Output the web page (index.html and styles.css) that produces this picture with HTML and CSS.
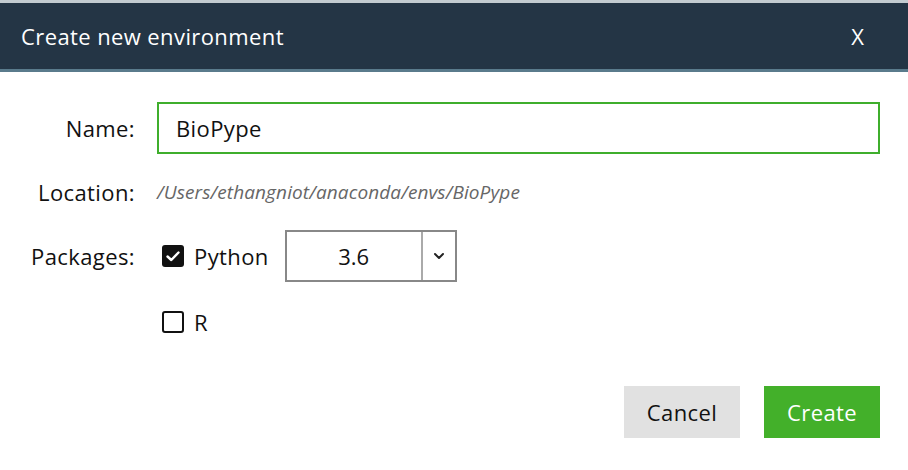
FILE: index.html
```html
<!DOCTYPE html>
<html>
<head>
<meta charset="utf-8">
<link rel="stylesheet" href="styles.css">
</head>
<body>
<div class="topstrip"></div>
<header class="header">
  <span class="title">Create new environment</span>
  <span class="close">X</span>
</header>
<div class="header-line"></div>
<main class="content">
  <div class="form">
    <label class="label">Name:</label>
    <div class="field"><div class="input">BioPype</div></div>

    <label class="label">Location:</label>
    <div class="field"><span class="path">/Users/ethangniot/anaconda/envs/BioPype</span></div>

    <label class="label">Packages:</label>
    <div class="field pkg">
      <span class="check checked">
        <svg width="22" height="22" viewBox="0 0 22 22"><path d="M5.5 11.5 L9.3 15 L16.5 7.5" fill="none" stroke="#fff" stroke-width="2.4" stroke-linecap="round" stroke-linejoin="round"/></svg>
      </span>
      <span class="pkg-name">Python</span>
      <div class="select">
        <span class="select-value">3.6</span>
        <span class="select-arrow">
          <svg width="12" height="8" viewBox="0 0 12 8"><path d="M2 2 L6 6 L10 2" fill="none" stroke="#222" stroke-width="2" stroke-linecap="round" stroke-linejoin="round"/></svg>
        </span>
      </div>
    </div>

    <span class="label"></span>
    <div class="field pkg r-row">
      <span class="check"></span>
      <span class="pkg-name">R</span>
    </div>
  </div>
  <div class="actions">
    <button class="btn cancel">Cancel</button>
    <button class="btn create">Create</button>
  </div>
</main>
</body>
</html>
```
FILE: styles.css
```css
* { box-sizing: border-box; }
html, body {
  margin: 0;
  padding: 0;
  background: #fff;
  font-family: "Open Sans", "Noto Sans", "DejaVu Sans", sans-serif;
  color: #111;
}
.topstrip {
  height: 3px;
  background: #c3cbd0;
}
.header {
  height: 66px;
  background: #243545;
  color: #fff;
  display: flex;
  align-items: center;
  justify-content: space-between;
  padding: 0 44px 0 21px;
}
.title {
  font-size: 22px;
  letter-spacing: 0.4px;
}
.close {
  font-size: 22px;
}
.header-line {
  height: 3px;
  background: #5a7b8c;
}
.content {
  padding: 30px 28px 0 0;
}
.form {
  display: grid;
  grid-template-columns: 135px 1fr;
  grid-template-rows: 52px 52px 52px 52px;
  column-gap: 22px;
  row-gap: 12px;
}
.label {
  font-size: 22px;
  text-align: right;
  display: flex;
  align-items: center;
  justify-content: flex-end;
  letter-spacing: 0.4px;
}
.field {
  display: flex;
  align-items: center;
}
.input {
  width: 100%;
  height: 52px;
  border: 2px solid #3fae2c;
  display: flex;
  align-items: center;
  padding-left: 17px;
  font-size: 22px;
  letter-spacing: 0.4px;
}
.path {
  font-size: 19px;
  font-style: italic;
  color: #666;
  letter-spacing: 0.1px;
}
.pkg {
  padding-left: 5px;
}
.r-row {
  margin-top: 3px;
}
.check {
  width: 22px;
  height: 22px;
  border: 2px solid #111;
  border-radius: 3px;
  display: inline-flex;
  flex: none;
}
.check.checked {
  background: #111;
  border: none;
}
.pkg-name {
  font-size: 22px;
  margin-left: 10px;
  letter-spacing: 0.4px;
}
.select {
  margin-left: 16px;
  width: 172px;
  height: 52px;
  border: 2px solid #888;
  display: flex;
}
.select-value {
  flex: 1;
  display: flex;
  align-items: center;
  justify-content: center;
  font-size: 22px;
  border-right: 2px solid #aaa;
}
.select-arrow {
  width: 32px;
  display: flex;
  align-items: center;
  justify-content: center;
}
.actions {
  display: flex;
  justify-content: flex-end;
  gap: 24px;
  margin-top: 40px;
}
.btn {
  width: 116px;
  height: 52px;
  border: none;
  font-family: inherit;
  font-size: 22px;
  letter-spacing: 0.4px;
  padding: 0;
}
.cancel {
  background: #e1e1e1;
  color: #111;
}
.create {
  background: #43b02a;
  color: #fff;
}
```
